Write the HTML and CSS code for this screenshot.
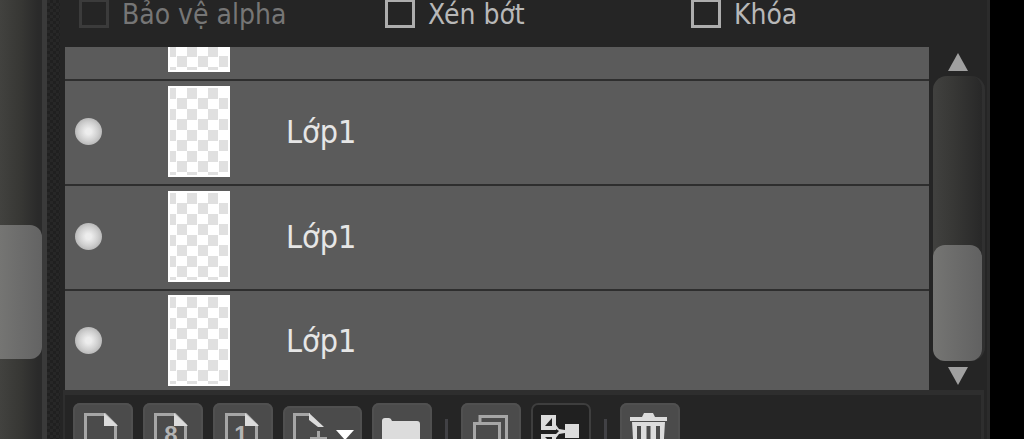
FILE: index.html
```html
<!DOCTYPE html>
<html lang="vi">
<head>
    <meta charset="UTF-8">
    <meta name="viewport" content="width=device-width, initial-scale=1.0">
    <title>Lớp</title>
    <link rel="stylesheet" href="styles.css">
</head>
<body>
    <div class="side-scroll">
        <div class="side-thumb"></div>
    </div>
    <div class="splitter"></div>
    <div class="panel">
        <div class="options">
            <label class="disabled"><input type="checkbox" disabled>Bảo vệ alpha</label>
            <label><input type="checkbox">Xén bớt</label>
            <label><input type="checkbox">Khóa</label>
        </div>
        <div class="layers">
            <div class="list">
                <div class="layer">
                    <span class="eye"></span>
                    <span class="thumb"></span>
                </div>
                <div class="layer">
                    <span class="eye"></span>
                    <span class="thumb"></span>
                    <span class="name">Lớp1</span>
                </div>
                <div class="layer">
                    <span class="eye"></span>
                    <span class="thumb"></span>
                    <span class="name">Lớp1</span>
                </div>
                <div class="layer">
                    <span class="eye"></span>
                    <span class="thumb"></span>
                    <span class="name">Lớp1</span>
                </div>
            </div>
            <div class="scrollbar">
                <button class="arrow up" aria-label="Lên"></button>
                <div class="track">
                    <div class="track-thumb"></div>
                </div>
                <button class="arrow down" aria-label="Xuống"></button>
            </div>
        </div>
        <div class="toolbar">
            <button aria-label="Lớp mới">
                <svg width="60" height="60" viewBox="0 0 60 60">
                    <path class="line" d="M12.500 60V11.500H32L42.500 22V60"/>
                    <path class="fill" d="M31 10L45 23H31Z"/>
                </svg>
            </button>
            <button aria-label="Lớp 8 bit">
                <svg width="60" height="60" viewBox="0 0 60 60">
                    <path class="line" d="M12.500 60V11.500H32L42.500 22V60"/>
                    <path class="fill" d="M31 10L45 23H31Z"/>
                    <text x="28" y="40">8</text>
                </svg>
            </button>
            <button aria-label="Lớp 1 bit">
                <svg width="60" height="60" viewBox="0 0 60 60">
                    <path class="line" d="M13.500 60V11.500H33L43.500 22V60"/>
                    <path class="fill" d="M32 10L46 23H32Z"/>
                    <text x="28" y="40">1</text>
                </svg>
            </button>
            <button class="wide" aria-label="Thêm lớp">
                <svg width="79" height="60" viewBox="0 0 79 60">
                    <path class="line" d="M11.500 60V8.500H27"/>
                    <path class="fill" d="M26 7L41 21H35L26 14Z"/>
                    <path class="line" d="M35.500 25V44M27 32.500H44"/>
                    <path class="white" d="M53 24H71L62 34Z"/>
                </svg>
            </button>
            <button aria-label="Thư mục mới">
                <svg width="60" height="60" viewBox="0 0 60 60">
                    <path class="fill" d="M10 18Q10 15 13 15H17Q19 15 20 18H45Q48 18 48 21V46H10Z"/>
                </svg>
            </button>
            <span class="sep"></span>
            <button aria-label="Nhân đôi">
                <svg width="60" height="60" viewBox="0 0 60 60">
                    <path class="line" d="M19 20V13.500H45.500V44H40"/>
                    <path class="line" d="M13.500 50V20.500H38.500V50Z"/>
                </svg>
            </button>
            <button class="dark" aria-label="Chuyển xuống">
                <svg width="60" height="60" viewBox="0 0 60 60">
                    <path class="fill" d="M10 12H25V27H10ZM10 31H25V45H10ZM34 21H48V35H34Z"/>
                    <path class="fill" d="M25 22L28 26L34 27V30L28 31L25 35V31L28 28L25 26Z"/>
                    <path class="ink" d="M14 23L21 15V23Z"/>
                    <path class="ink" d="M14 34H21V41Z"/>
                </svg>
            </button>
            <span class="sep"></span>
            <button aria-label="Xóa">
                <svg width="60" height="60" viewBox="0 0 60 60">
                    <path class="fill" d="M22 14L24 10H33L35 14H47V18H10V14Z"/>
                    <path class="fill" d="M12 19H45L43 52H14Z"/>
                    <path class="slit" d="M19 23V47M28.500 23V47M38 23V47"/>
                </svg>
            </button>
        </div>
    </div>
    <div class="outside"></div>
</body>
</html>
```

FILE: styles.css
```css
* {
    box-sizing: border-box;
}
body {
    margin: 0;
    height: 100vh;
    display: flex;
    overflow: hidden;
    background-color: #252525;
    color: #e6e6e6;
    font-family: "DejaVu Sans Condensed", "DejaVu Sans", sans-serif;
    font-size: 28px;
}
button {
    padding: 0;
    border: none;
}

/* left scrollbar */
.side-scroll {
    flex: none;
    width: 42px;
    padding-top: 225px;
    background: linear-gradient(to right, #42423f, #373734 50%, #2a2a2a 90%);
}
.side-thumb {
    height: 134px;
    border-radius: 0 12px 12px 0;
    background: linear-gradient(to right, #757573, #636363);
}
.splitter {
    flex: none;
    width: 18px;
    border-left: 5px solid #3a3a3a;
    background: repeating-conic-gradient(#202020 0 25%, #272727 0 50%) 0 0 / 6px 6px;
}

.panel {
    flex: 1;
    min-width: 0;
    display: flex;
    flex-direction: column;
    border-right: 3px solid #2b2b2b;
}
.options {
    flex: none;
    height: 47px;
    padding-left: 19px;
    display: flex;
}
.options label {
    flex: none;
    width: 33.7%;
    height: 30px;
    display: flex;
    align-items: center;
    gap: 13px;
    line-height: 30px;
    color: #b8b8b8;
}
.options label:last-child {
    flex: 1;
}
.options .disabled {
    color: #767676;
}
.options input {
    appearance: none;
    align-self: flex-start;
    width: 30px;
    height: 28px;
    margin: 0;
    border: 3px solid #adadad;
    border-top-width: 2px;
}
.options .disabled input {
    border-color: #3b3b3b;
}

/* layer list, scrolled to the end */
.layers {
    flex: 1;
    min-height: 0;
    display: flex;
    padding-left: 5px;
}
.list {
    flex: 1;
    display: flex;
    flex-direction: column;
    justify-content: flex-end;
    overflow: hidden;
    background-color: #5b5b5b;
}
.layer {
    flex: none;
    height: 105px;
    padding: 0 0 2px 10px;
    display: flex;
    align-items: center;
    border-bottom: 2px solid #2e2e2e;
}
.layer:last-child {
    height: 99px;
    padding-bottom: 0;
    border-bottom: none;
}
.eye {
    width: 27px;
    height: 27px;
    border-radius: 50%;
    background: radial-gradient(circle, #ededed 15%, #cfcfcf 50%, #bababa 70%);
}
.thumb {
    width: 62px;
    height: 91px;
    margin-left: 66px;
    border: 2px solid #fff;
    background: repeating-conic-gradient(#fff 0 25%, #e0e0e0 0 50%) -4px 0 / 21px 21px;
}
.name {
    margin-left: 56px;
    font-size: 32px;
}

.scrollbar {
    flex: none;
    width: 58px;
    padding-left: 4px;
    display: flex;
    flex-direction: column;
}
.arrow {
    width: 50px;
    height: 29px;
    display: flex;
    align-items: center;
    justify-content: center;
    background: none;
}
.arrow::before {
    content: "";
    border: 10px solid transparent;
}
.up::before {
    border-top: none;
    border-bottom: 18px solid #a0a0a0;
}
.down::before {
    border-bottom: none;
    border-top: 18px solid #a0a0a0;
}
.track {
    flex: 1;
    width: 52px;
    display: flex;
    align-items: flex-end;
    border-right: 3px solid #303030;
    border-radius: 14px;
    background: linear-gradient(to right, #41413f, #383836 40%, #282828);
}
.track-thumb {
    width: 49px;
    height: 116px;
    border-radius: 12px;
    background: linear-gradient(to right, #757573, #616161);
}

.toolbar {
    flex: none;
    height: 49px;
    margin: 0 3px;
    padding: 8px 0 0 8px;
    display: flex;
    align-items: flex-start;
    gap: 10px;
    overflow: hidden;
    border-top: 5px solid #2e2e2e;
    border-left: 2px solid #2e2e2e;
    border-right: 3px solid #2e2e2e;
}
.toolbar button {
    flex: none;
    width: 60px;
    height: 60px;
    border-radius: 7px;
    background-color: #4b4b4b;
    box-shadow: inset 0 0 0 2px #505050;
}
.toolbar .wide {
    width: 79px;
    margin-top: 3px;
}
.toolbar .dark {
    background-color: #202020;
    box-shadow: inset 0 0 0 2px #3e3e3e;
}
.toolbar svg {
    display: block;
}
.sep {
    width: 3px;
    height: 40px;
    margin: 16px 3px 0;
    background-color: #414145;
}
.line {
    fill: none;
    stroke: #a6a6a6;
    stroke-width: 3;
}
.fill {
    fill: #dcdcdc;
}
.white {
    fill: #fff;
}
.ink {
    fill: #202020;
}
.slit {
    stroke: #4b4b4b;
    stroke-width: 4;
}
.toolbar text {
    fill: #b4b4b4;
    font-size: 24px;
    font-weight: bold;
    text-anchor: middle;
}
.outside {
    flex: none;
    width: 34px;
    background-color: #000;
}
```
